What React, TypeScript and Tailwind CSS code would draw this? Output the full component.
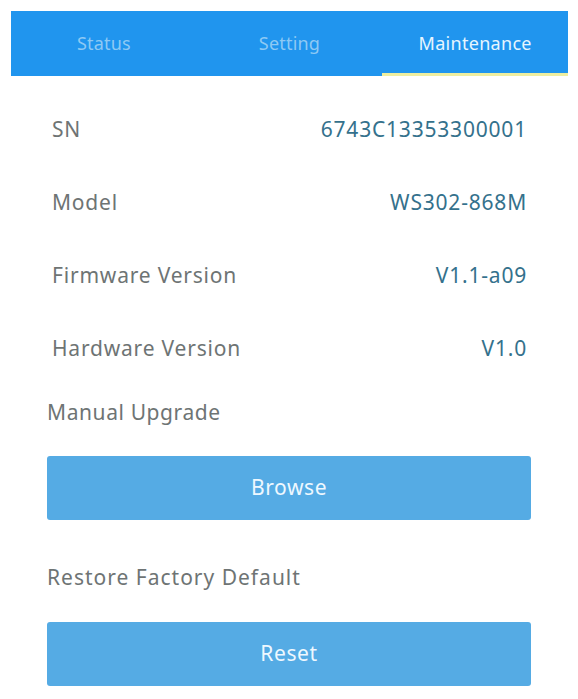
import React from "react";

const rows: [string, string][] = [
  ["SN", "6743C13353300001"],
  ["Model", "WS302-868M"],
  ["Firmware Version", "V1.1-a09"],
  ["Hardware Version", "V1.0"],
];

export default function App() {
  return (
    <div
      className="w-[578px] h-[699px] bg-white overflow-hidden"
      style={{ fontFamily: '"Noto Sans", "Liberation Sans", sans-serif' }}
    >
      <div className="mt-[11px] ml-[11px] mr-[10px] h-[65px] bg-[#2095ee] flex">
        <div className="flex-1 flex items-center justify-center text-[18px] tracking-[0.2px] text-[#8ec9f4]">Status</div>
        <div className="flex-1 flex items-center justify-center text-[18px] tracking-[0.2px] text-[#8ec9f4]">Setting</div>
        <div className="flex-1 flex flex-col">
          <div className="flex-1 flex items-center justify-center pt-[3px] text-[18px] tracking-[0.3px] text-[#e6f5ff]">Maintenance</div>
          <div className="h-[3px] bg-[#eeeea0]" />
        </div>
      </div>
      <div className="mt-[17px] pl-[52px] pr-[51px]">
        {rows.map(([k, v]) => (
          <div key={k} className="h-[73px] flex items-center justify-between text-[21px] tracking-[0.8px]">
            <span className="text-[#6e7474]">{k}</span>
            <span className="text-[#34718c]">{v}</span>
          </div>
        ))}
      </div>
      <div className="pl-[47px] pr-[47px]">
        <div className="mt-[14px] h-[28px] flex items-center text-[21px] tracking-[0.6px] text-[#6e7474]">Manual Upgrade</div>
        <div className="mt-[29px] h-[64px] rounded-[3px] bg-[#55abe4] flex items-center justify-center text-[21px] tracking-[0.6px] text-[#eef8ff]">
          Browse
        </div>
        <div className="mt-[44px] h-[28px] flex items-center text-[21px] tracking-[1px] text-[#6e7474]">Restore Factory Default</div>
        <div className="mt-[30px] h-[64px] rounded-[3px] bg-[#55abe4] flex items-center justify-center text-[21px] tracking-[0.6px] text-[#eef8ff]">
          Reset
        </div>
      </div>
    </div>
  );
}
